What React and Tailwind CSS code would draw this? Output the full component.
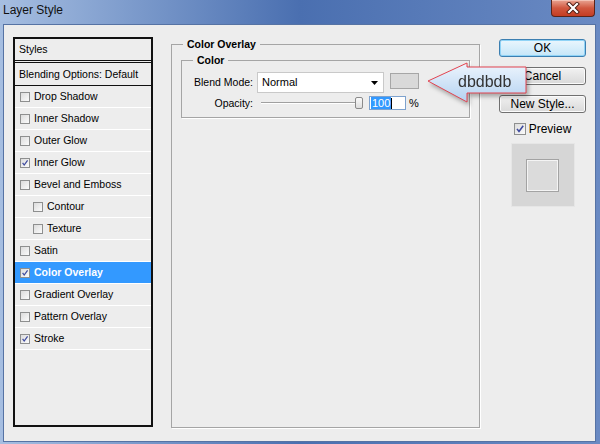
import React from 'react';

const styles = [
  { label: 'Drop Shadow' },
  { label: 'Inner Shadow' },
  { label: 'Outer Glow' },
  { label: 'Inner Glow', checked: true },
  { label: 'Bevel and Emboss' },
  { label: 'Contour', indent: true },
  { label: 'Texture', indent: true },
  { label: 'Satin' },
  { label: 'Color Overlay', checked: true, active: true },
  { label: 'Gradient Overlay' },
  { label: 'Pattern Overlay' },
  { label: 'Stroke', checked: true },
];

function Check({ size = 9 }) {
  return (
    <svg width={size} height={size} viewBox="0 0 9 9" className="block">
      <path d="M1.8 4.4 L3.6 6.8 L7.4 1.6" fill="none" stroke="#3e4a9e" strokeWidth="1.4" />
    </svg>
  );
}

function Checkbox({ checked, big }) {
  return (
    <div
      className={
        big
          ? 'w-[12px] h-[12px] border border-[#8e8f8f] bg-gradient-to-br from-[#dcdcdc] to-[#fbfbfb] flex items-center justify-center'
          : 'w-[10px] h-[10px] border border-[#8e8f8f] bg-gradient-to-br from-[#dcdcdc] to-[#fbfbfb] flex items-center justify-center'
      }
    >
      {checked && <Check size={big ? 10 : 8} />}
    </div>
  );
}

function Button({ children, primary }) {
  return (
    <div
      className={
        primary
          ? 'h-[18px] rounded-[3px] border border-[#3c7fb1] shadow-[inset_0_0_0_1px_#8fd3f6] bg-gradient-to-b from-[#eaf6fd] to-[#c5e6f8] flex items-center justify-center text-[12px] leading-[14px] text-black'
          : 'h-[18px] rounded-[3px] border border-[#707070] shadow-[inset_0_0_0_1px_#fbfbfb] bg-gradient-to-b from-[#f2f2f2] to-[#d9d9d9] flex items-center justify-center text-[12px] leading-[14px] text-black'
      }
    >
      {children}
    </div>
  );
}

export default function App() {
  return (
    <div className="relative w-[600px] h-[444px] overflow-hidden flex flex-col bg-gradient-to-r from-[#a6bee1] via-[#4a6fb0] to-[#6a8ac3] font-['Liberation_Sans',Arial,sans-serif] text-black">
      {/* Title bar */}
      <div className="h-[24px] flex items-start shrink-0">
        <div className="pl-[3px] pt-[3px] text-[12px] leading-[14px] text-[#111]">Layer Style</div>
        <div className="ml-auto mr-[5px] w-[44px] h-[17px] rounded-b-[4px] border border-t-0 border-[#5b2419] bg-gradient-to-b from-[#e8a493] via-[#d0573f] to-[#c43c22] shadow-[inset_0_1px_0_#f3c2b5] flex items-center justify-center">
          <svg width="16" height="12" viewBox="0 0 16 12">
            <path d="M4 2 L12 10 M12 2 L4 10" stroke="#4a1a12" strokeWidth="4" strokeLinecap="square" />
            <path d="M4 2 L12 10 M12 2 L4 10" stroke="#ffffff" strokeWidth="2.2" strokeLinecap="square" />
          </svg>
        </div>
      </div>

      {/* Client area */}
      <div className="flex-1 ml-[3px] mr-[4px] mb-[2px] border border-[#5673a4] bg-[#ededed] flex items-start pl-[9px] pt-[12px]">
        {/* Styles list */}
        <div className="w-[140px] h-[390px] border-2 border-[#111] bg-[#ededed] flex flex-col text-[10.5px] leading-[13px]">
          <div className="h-[21px] pl-[4px] flex items-center">Styles</div>
          <div className="h-[3px] border-y border-[#111]" />
          <div className="h-[23px] pl-[4px] flex items-center border-b border-[#111]">Blending Options: Default</div>
          {styles.map((s) => (
            <div
              key={s.label}
              className={
                (s.active ? 'bg-[#3399ff] text-white font-bold ' : '') +
                (s.indent ? 'pl-[18px] ' : 'pl-[5px] ') +
                'h-[22px] flex items-center gap-[4px] border-b border-white'
              }
            >
              <Checkbox checked={s.checked} />
              <span>{s.label}</span>
            </div>
          ))}
        </div>

        {/* Color Overlay group */}
        <fieldset className="ml-[18px] w-[309px] h-[391px] border border-[#a5a5a5] shadow-[1px_1px_0_#ffffff] px-[9px] pt-[2px]">
          <legend className="ml-[2px] px-[4px] font-bold text-[10.5px] leading-[14px]">Color Overlay</legend>
          <fieldset className="border border-[#a5a5a5] shadow-[1px_1px_0_#ffffff] pb-[7px]">
            <legend className="ml-[11px] px-[4px] font-bold text-[10.5px] leading-[14px]">Color</legend>
            <div className="mt-[5px] flex items-start text-[10.5px] leading-[13px]">
              <div className="w-[71px] h-[21px] flex items-center justify-end">Blend Mode:</div>
              <div className="ml-[4px] w-[127px] h-[21px] bg-white border border-[#c9c9c9] flex items-center pl-[4px] pr-[5px]">
                <span className="text-[11px]">Normal</span>
                <svg width="7" height="4" viewBox="0 0 7 4" className="ml-auto">
                  <path d="M0 0 H7 L3.5 4 Z" fill="#000" />
                </svg>
              </div>
              <div className="ml-[6px] mt-[1px] w-[29px] h-[16px] bg-[#d9d9d9] border border-[#a6a6a6]" />
            </div>
            <div className="mt-[3px] h-[14px] flex items-center text-[10.5px] leading-[13px]">
              <div className="w-[71px] text-right">Opacity:</div>
              <div className="relative ml-[8px] w-[102px] h-[14px]">
                <div className="absolute left-0 right-[4px] top-[6px] h-[2px] border-t border-[#a0a0a0] border-b border-b-white" />
                <div className="absolute right-0 top-[1px] w-[8px] h-[12px] rounded-[2px] border border-[#8a8a8a] bg-gradient-to-b from-[#fafafa] to-[#dedede]" />
              </div>
              <div className="ml-[6px] w-[37px] h-[14px] bg-white border border-[#7da2ce] flex items-center pl-[1px]">
                <span className="bg-[#3399ff] text-white text-[11px] leading-[12px] px-[1px]">100</span>
                <span className="w-[1px] h-[11px] bg-black" />
              </div>
              <span className="ml-[3px] text-[11px]">%</span>
            </div>
          </fieldset>
        </fieldset>

        {/* Buttons */}
        <div className="ml-[19px] mt-[2px] w-[87px] flex flex-col">
          <Button primary>OK</Button>
          <div className="mt-[10px]">
            <Button>Cancel</Button>
          </div>
          <div className="mt-[10px]">
            <Button>New Style...</Button>
          </div>
          <div className="mt-[9px] h-[14px] flex items-center justify-center gap-[3px]">
            <Checkbox checked big />
            <span className="text-[12px] leading-[14px]">Preview</span>
          </div>
          <div className="mt-[7px] mx-auto w-[64px] h-[64px] bg-[#d6d6d6] border border-[#e6e6e6] flex items-center justify-center">
            <div className="w-[33px] h-[33px] bg-[#dbdbdb] border border-[#a3a3a3] shadow-[inset_0_0_0_1px_#f4f4f4]" />
          </div>
        </div>
      </div>

      {/* Callout */}
      <div className="absolute left-[424px] top-[58px] w-[110px] h-[50px]">
        <svg width="110" height="50" viewBox="0 0 110 50" style={{ filter: 'drop-shadow(2px 3px 2px rgba(0,0,0,0.3))' }}>
          <defs>
            <linearGradient id="cg" x1="0" y1="0" x2="0" y2="1">
              <stop offset="0" stopColor="#eef5fd" />
              <stop offset="1" stopColor="#b3d2f1" />
            </linearGradient>
          </defs>
          <path d="M4 23 L43 5 L43 9 L102 9 L102 35 L43 35 L43 44 Z" fill="url(#cg)" stroke="#e2434f" strokeWidth="1" />
          <text x="34" y="29" fontSize="16" fill="#333" fontFamily="'Liberation Sans', Arial, sans-serif">dbdbdb</text>
        </svg>
      </div>
    </div>
  );
}
